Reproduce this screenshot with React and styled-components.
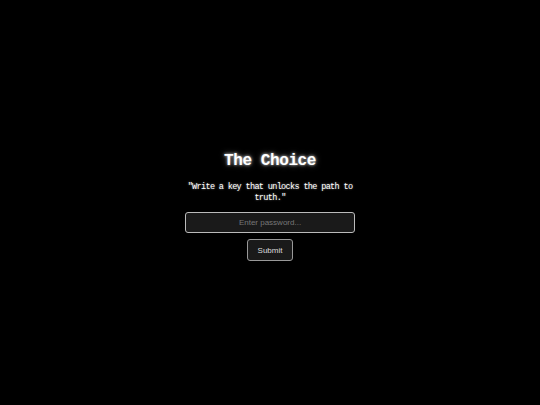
import styled, { createGlobalStyle } from "styled-components";

const GlobalStyle = createGlobalStyle`
  html, body {
    margin: 0;
    padding: 0;
    background: #000;
  }
`;

const Page = styled.div`
  box-sizing: border-box;
  display: flex;
  align-items: center;
  justify-content: center;
  height: 100vh;
  padding-top: 6px;
  background: #000;
  color: #fff;
`;

const Box = styled.div`
  width: 170px;
  display: flex;
  flex-direction: column;
  align-items: center;
  text-align: center;
`;

const Title = styled.h1`
  margin: 0 0 10px;
  font-family: "Liberation Mono", "DejaVu Sans Mono", monospace;
  font-size: 16px;
  font-weight: 700;
  letter-spacing: -0.4px;
  line-height: 22px;
  color: #fff;
  text-shadow: 0 0 3px rgba(255, 255, 255, 0.8), 0 0 6px rgba(255, 255, 255, 0.4);
`;

const Quote = styled.p`
  margin: 0 0 8px;
  font-family: "Liberation Mono", "DejaVu Sans Mono", monospace;
  font-size: 8.5px;
  letter-spacing: -0.65px;
  line-height: 11px;
  color: #fff;
  text-shadow: 0 0 2px rgba(255, 255, 255, 0.5);
`;

const Input = styled.input`
  box-sizing: border-box;
  width: 170px;
  height: 21px;
  padding: 0 6px;
  background: #1a1a1a;
  border: 1px solid #bbb;
  border-radius: 3px;
  color: #fff;
  text-align: center;
  font-family: "Liberation Sans", Arial, sans-serif;
  font-size: 8px;
  outline: none;

  &::placeholder {
    color: #777;
  }
`;

const Button = styled.button`
  margin-top: 6px;
  box-sizing: border-box;
  width: 46px;
  height: 22px;
  padding: 0;
  background: #1a1a1a;
  border: 1px solid #999;
  border-radius: 3px;
  color: #ddd;
  font-family: "Liberation Sans", Arial, sans-serif;
  font-size: 8px;
  cursor: pointer;
`;

export default function App() {
  return (
    <>
      <GlobalStyle />
      <Page>
        <Box>
          <Title>The Choice</Title>
          <Quote>"Write a key that unlocks the path to truth."</Quote>
          <Input type="password" placeholder="Enter password..." />
          <Button>Submit</Button>
        </Box>
      </Page>
    </>
  );
}
